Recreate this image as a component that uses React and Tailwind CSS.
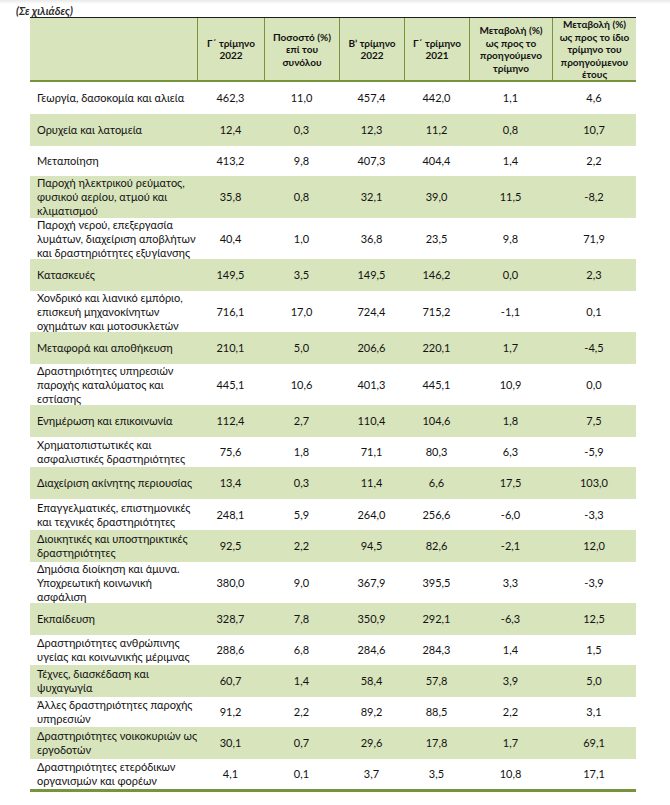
import React from "react";

const rows = [
  [["Γεωργία, δασοκομία και αλιεία"], ["462,3", "11,0", "457,4", "442,0", "1,1", "4,6"], 32],
  [["Ορυχεία και λατομεία"], ["12,4", "0,3", "12,3", "11,2", "0,8", "10,7"], 32],
  [["Μεταποίηση"], ["413,2", "9,8", "407,3", "404,4", "1,4", "2,2"], 30],
  [["Παροχή ηλεκτρικού ρεύματος,", "φυσικού αερίου, ατμού και", "κλιματισμού"], ["35,8", "0,8", "32,1", "39,0", "11,5", "-8,2"], 42],
  [["Παροχή νερού, επεξεργασία", "λυμάτων, διαχείριση αποβλήτων", "και δραστηριότητες εξυγίανσης"], ["40,4", "1,0", "36,8", "23,5", "9,8", "71,9"], 41],
  [["Κατασκευές"], ["149,5", "3,5", "149,5", "146,2", "0,0", "2,3"], 32],
  [["Χονδρικό και λιανικό εμπόριο,", "επισκευή μηχανοκίνητων", "οχημάτων και μοτοσυκλετών"], ["716,1", "17,0", "724,4", "715,2", "-1,1", "0,1"], 41],
  [["Μεταφορά και αποθήκευση"], ["210,1", "5,0", "206,6", "220,1", "1,7", "-4,5"], 32],
  [["Δραστηριότητες υπηρεσιών", "παροχής καταλύματος και", "εστίασης"], ["445,1", "10,6", "401,3", "445,1", "10,9", "0,0"], 41],
  [["Ενημέρωση και επικοινωνία"], ["112,4", "2,7", "110,4", "104,6", "1,8", "7,5"], 32],
  [["Χρηματοπιστωτικές και", "ασφαλιστικές δραστηριότητες"], ["75,6", "1,8", "71,1", "80,3", "6,3", "-5,9"], 30],
  [["Διαχείριση ακίνητης περιουσίας"], ["13,4", "0,3", "11,4", "6,6", "17,5", "103,0"], 32],
  [["Επαγγελματικές, επιστημονικές", "και τεχνικές δραστηριότητες"], ["248,1", "5,9", "264,0", "256,6", "-6,0", "-3,3"], 31],
  [["Διοικητικές και υποστηρικτικές", "δραστηριότητες"], ["92,5", "2,2", "94,5", "82,6", "-2,1", "12,0"], 32],
  [["Δημόσια διοίκηση και άμυνα.", "Υποχρεωτική κοινωνική", "ασφάλιση"], ["380,0", "9,0", "367,9", "395,5", "3,3", "-3,9"], 41],
  [["Εκπαίδευση"], ["328,7", "7,8", "350,9", "292,1", "-6,3", "12,5"], 32],
  [["Δραστηριότητες ανθρώπινης", "υγείας και κοινωνικής μέριμνας"], ["288,6", "6,8", "284,6", "284,3", "1,4", "1,5"], 30],
  [["Τέχνες, διασκέδαση και", "ψυχαγωγία"], ["60,7", "1,4", "58,4", "57,8", "3,9", "5,0"], 32],
  [["Άλλες δραστηριότητες παροχής", "υπηρεσιών"], ["91,2", "2,2", "89,2", "88,5", "2,2", "3,1"], 30],
  [["Δραστηριότητες νοικοκυριών ως", "εργοδοτών"], ["30,1", "0,7", "29,6", "17,8", "1,7", "69,1"], 32],
  [["Δραστηριότητες ετερόδικων", "οργανισμών και φορέων"], ["4,1", "0,1", "3,7", "3,5", "10,8", "17,1"], 30],
];

const headers = [
  ["Γ΄ τρίμηνο", "2022"],
  ["Ποσοστό (%)", "επί του", "συνόλου"],
  ["Β’ τρίμηνο", "2022"],
  ["Γ΄ τρίμηνο", "2021"],
  ["Μεταβολή (%)", "ως προς το", "προηγούμενο", "τρίμηνο"],
  ["Μεταβολή (%)", "ως προς το ίδιο", "τρίμηνο του", "προηγούμενου", "έτους"],
];

const grid = "grid grid-cols-[167px_67px_75px_65px_65px_83px_84px]";

export default function App() {
  return (
    <div className="w-[670px] h-[805px] bg-white text-[#121212] font-['Lato','Open_Sans',sans-serif]">
      <div className="h-[4px] bg-gradient-to-b from-[#e9e9e9] to-white" />
      <div className="h-[13px] pl-[16px] text-[11px] leading-[13px] italic font-bold text-[#2a2a2a] whitespace-nowrap">
        (Σε χιλιάδες)
      </div>
      <div className="ml-[30px] w-[606px] border-t border-[#1e1e1e]">
        <div className={`${grid} h-[62px] bg-[#d8e4bc] border-b-2 border-[#77933c] box-content`}>
          <div />
          {headers.map((h, i) => (
            <div
              key={i}
              className="flex flex-col items-center justify-center border-l border-[#77933c] text-[10px] leading-[12.5px] font-bold text-center whitespace-nowrap"
            >
              {h.map((l, j) => (
                <span key={j}>{l}</span>
              ))}
            </div>
          ))}
        </div>
        {rows.map(([label, vals, h], i) => (
          <div
            key={i}
            className={`${grid} ${i % 2 === 1 ? "bg-[#d8e4bc]" : "bg-white"} text-[11px] leading-[14px]`}
            style={{ height: h }}
          >
            <div className="flex flex-col justify-center pl-[7px] whitespace-nowrap">
              {label.map((l, j) => (
                <span key={j}>{l}</span>
              ))}
            </div>
            {vals.map((v, j) => (
              <div key={j} className="flex items-center justify-center">
                {v}
              </div>
            ))}
          </div>
        ))}
        <div className="h-[3px] bg-[#77933c]" />
      </div>
    </div>
  );
}
